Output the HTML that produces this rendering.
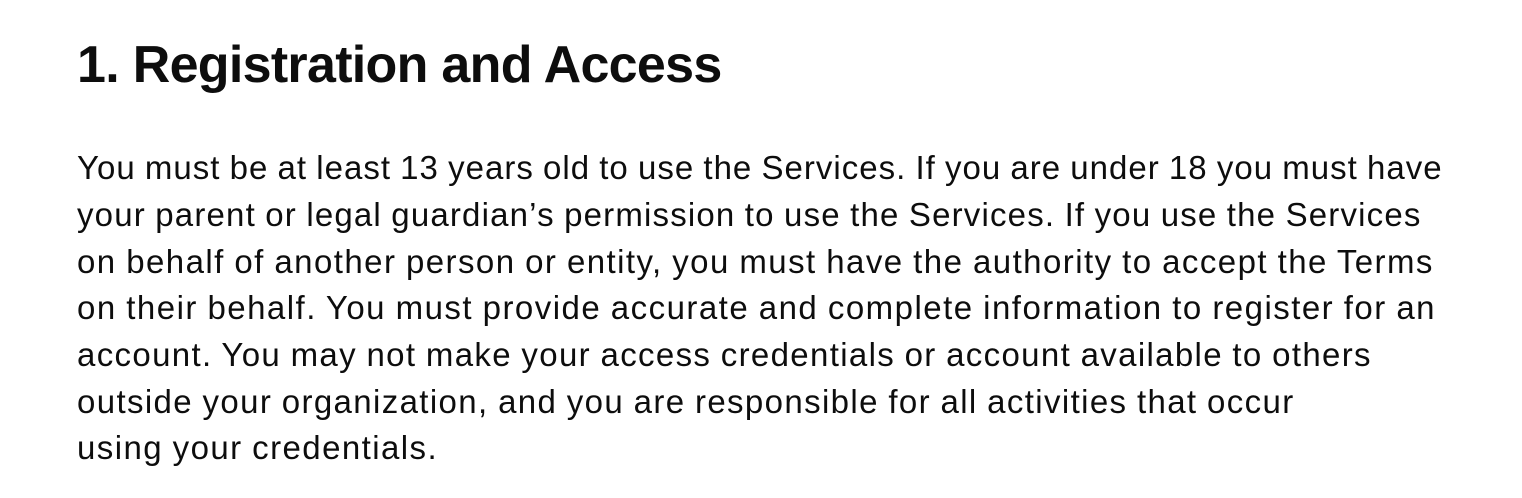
<!DOCTYPE html>
<html><head><meta charset="utf-8"><style>
html,body{margin:0;padding:0;background:#fff;width:1522px;height:498px;overflow:hidden}
body{font-family:"Liberation Sans",sans-serif;color:#0d0d0d}
h1{position:absolute;left:77px;top:30px;margin:0;font-size:52px;font-weight:bold;letter-spacing:-0.7px;line-height:70px;white-space:nowrap}
.l{position:absolute;left:77px;font-size:33px;line-height:40px;white-space:nowrap;letter-spacing:0.95px;word-spacing:-1px}
</style></head><body>
<h1>1. Registration and Access</h1>
<div class="l" style="top:148px;letter-spacing:1.01px">You must be at least 13 years old to use the Services. If you are under 18 you must have</div>
<div class="l" style="top:195px;letter-spacing:1.18px">your parent or legal guardian’s permission to use the Services. If you use the Services</div>
<div class="l" style="top:242px;letter-spacing:1.44px">on behalf of another person or entity, you must have the authority to accept the Terms</div>
<div class="l" style="top:288px;letter-spacing:1.47px">on their behalf. You must provide accurate and complete information to register for an</div>
<div class="l" style="top:335px;letter-spacing:1.34px">account. You may not make your access credentials or account available to others</div>
<div class="l" style="top:382px;letter-spacing:1.37px">outside your organization, and you are responsible for all activities that occur</div>
<div class="l" style="top:428px;letter-spacing:1.43px">using your credentials.</div>
</body></html>
